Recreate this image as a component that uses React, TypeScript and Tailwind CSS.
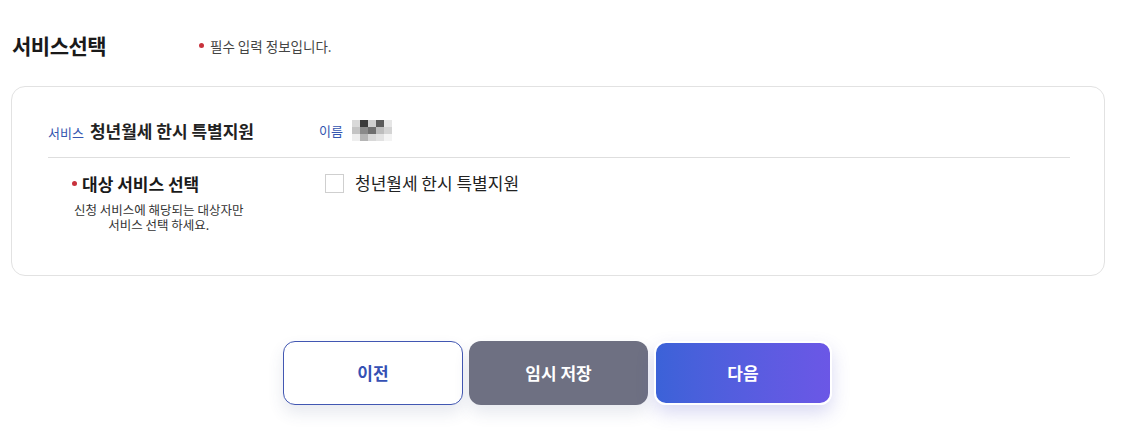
import React from 'react'

const FONT = "font-['Noto_Sans_CJK_KR','Noto_Sans',sans-serif]"

function BlurredName() {
  // pixelated (masked) name
  const cells = [
    ['#d9d9d9', '#3a3a3a', '#cfcfcf', '#5b5b5b', '#e6e6e6'],
    ['#c4c4c4', '#8a8a8a', '#6f6f6f', '#bdbdbd', '#d4d4d4'],
    ['#eeeeee', '#b5b5b5', '#d8d8d8', '#e2e2e2', '#f3f3f3'],
  ]
  return (
    <svg width="42" height="24" viewBox="0 0 42 24" aria-hidden="true">
      {cells.map((row, r) =>
        row.map((c, i) => <rect key={`${r}-${i}`} x={i * 8 + 1} y={r * 7 + 2} width="8" height="7" fill={c} />),
      )}
    </svg>
  )
}

export default function App() {
  return (
    <div className={`${FONT} h-[446px] w-[1126px] bg-white text-[#222]`}>
      <div className="flex items-center px-3 pt-[30px]">
        <h2 className="w-[187px] text-[21px] font-bold tracking-[-0.5px] text-[#1a1a1a]">서비스선택</h2>
        <p className="flex items-center gap-1.5 text-[13.5px] text-[#444]">
          <span className="h-[5px] w-[5px] rounded-full bg-[#c8323c]" />
          필수 입력 정보입니다.
        </p>
      </div>

      <div className="ml-[11px] mr-[21px] mt-[24px] h-[190px] rounded-[14px] border border-[#e2e2e2] pl-[36px] pr-[34px] pt-[31px]">
        <div className="flex items-center border-b border-[#dedede] pb-[14px]">
          <div className="flex w-[271px] items-baseline gap-[6px]">
            <span className="text-[13px] text-[#3556b0]">서비스</span>
            <span className="text-[17px] font-semibold text-[#222]">청년월세 한시 특별지원</span>
          </div>
          <div className="flex items-center gap-[8px]">
            <span className="text-[13px] text-[#3556b0]">이름</span>
            <BlurredName />
          </div>
        </div>

        <div className="flex pt-[13px]">
          <div className="flex w-[277px] flex-col items-start pl-[24px]">
            <div className="flex items-center gap-[5px]">
              <span className="h-[5px] w-[5px] rounded-full bg-[#c8323c]" />
              <span className="text-[17px] font-bold text-[#1a1a1a]">대상 서비스 선택</span>
            </div>
            <div className="ml-[2px] mt-[5px] flex flex-col items-center text-[12.5px] leading-[15px] text-[#333]">
              <span>신청 서비스에 해당되는 대상자만</span>
              <span>서비스 선택 하세요.</span>
            </div>
          </div>
          <label className="flex h-[24px] items-center gap-[11px]">
            <span className="h-[19px] w-[19px] border border-[#cfcfcf] bg-white" />
            <span className="text-[17px] text-[#222]">청년월세 한시 특별지원</span>
          </label>
        </div>
      </div>

      <div className="mt-[65px] flex justify-center gap-[6px] pr-[11px]">
        <button className="h-[64px] w-[180px] rounded-[12px] border border-[#4257b2] bg-white text-[17px] font-bold text-[#3550b4] shadow-[0_8px_16px_rgba(60,70,120,0.12)]">
          이전
        </button>
        <button className="h-[64px] w-[179px] rounded-[12px] bg-[#6e7082] text-[17px] font-bold text-white shadow-[0_8px_16px_rgba(60,70,120,0.12)]">
          임시 저장
        </button>
        <button className="h-[64px] w-[178px] rounded-[12px] border-2 border-white bg-gradient-to-r from-[#3b62d8] to-[#6b57e6] text-[17px] font-bold text-white shadow-[0_8px_18px_rgba(80,80,200,0.22)]">
          다음
        </button>
      </div>
    </div>
  )
}
